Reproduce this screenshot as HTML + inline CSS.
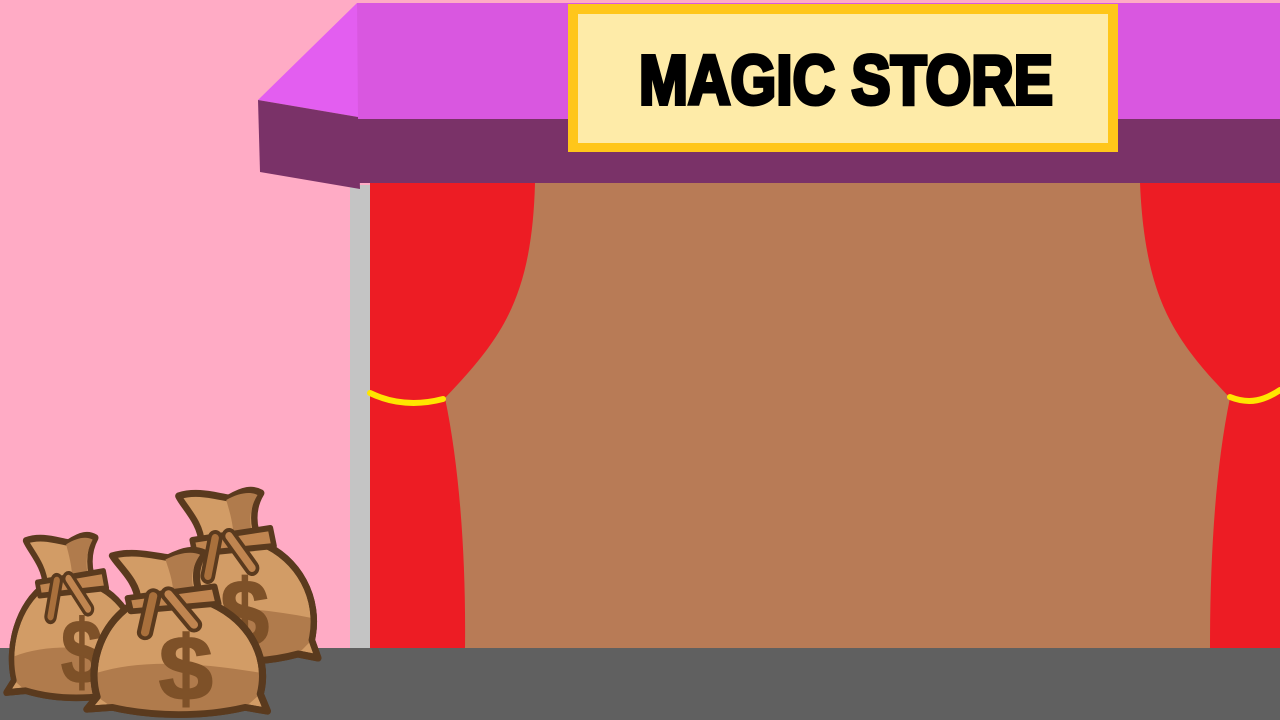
<!DOCTYPE html>
<html><head><meta charset="utf-8"><style>
html,body{margin:0;padding:0;width:1280px;height:720px;overflow:hidden;background:#FFABC5}
svg{display:block}
</style></head><body>
<svg width="1280" height="720" viewBox="0 0 1280 720">
<defs>
<g id="bag">
  <path d="M45 55 C10 75 -5 120 5 155 L-5 168 L20 166 C60 176 110 176 150 166 L172 170 L165 152 C175 110 150 70 110 55 Z" fill="#D29C66" stroke="#5A3A1E" stroke-width="7" stroke-linejoin="round"/>
  <path d="M5 130 C50 115 110 120 165 130 C168 145 168 152 165 152 L150 166 C110 176 60 176 20 166 L5 155 Z" fill="#B07B4C"/>
  <path d="M45 55 C10 75 -5 120 5 155 L-5 168 L20 166 C60 176 110 176 150 166 L172 170 L165 152 C175 110 150 70 110 55 Z" fill="none" stroke="#5A3A1E" stroke-width="7" stroke-linejoin="round"/>
  <path d="M45 55 C45 35 25 18 20 8 C40 2 60 8 75 10 C90 2 100 0 110 5 C100 20 100 40 110 55 Z" fill="#D29C66" stroke="#5A3A1E" stroke-width="7" stroke-linejoin="round"/>
  <path d="M72 12 C85 5 98 3 106 7 C96 22 96 40 104 52 L80 52 C80 35 75 22 72 12Z" fill="#B07B4C"/>
  <text x="92" y="158" font-family="Liberation Sans, sans-serif" font-weight="bold" font-size="95" fill="#7E5128" stroke="#7E5128" stroke-width="2" text-anchor="middle">$</text>
  <path d="M35 52 L120 40 L124 58 L38 66 Z" fill="#C08550" stroke="#5A3A1E" stroke-width="6" stroke-linejoin="round"/>
  <path d="M60 50 L52 88" stroke="#5A3A1E" stroke-width="16" stroke-linecap="round"/>
  <path d="M60 50 L52 88" stroke="#A9703C" stroke-width="8" stroke-linecap="round"/>
  <path d="M75 48 L100 80" stroke="#5A3A1E" stroke-width="16" stroke-linecap="round"/>
  <path d="M75 48 L100 80" stroke="#C08550" stroke-width="8" stroke-linecap="round"/>
</g>
</defs>
<rect width="1280" height="720" fill="#FFABC5"/>
<rect x="0" y="648" width="1280" height="72" fill="#606060"/>
<rect x="350" y="185" width="20" height="463" fill="#C4C4C4"/>
<rect x="370" y="183" width="910" height="465" fill="#B87B56"/>
<rect x="357" y="3" width="923" height="116" fill="#D957E0"/>
<rect x="358" y="119" width="922" height="64" fill="#7A3268"/>
<polygon points="357,3 258,100 358,117" fill="#E35EF0"/>
<polygon points="258,100 358,117 360,189 260,172" fill="#7A3268"/>
<rect x="568" y="4" width="550" height="148" fill="#FFC61A"/>
<rect x="578" y="14" width="530" height="129" fill="#FEEBA8"/>
<text x="846" y="104" font-family="Liberation Sans, sans-serif" font-weight="bold" font-size="70" fill="#000" stroke="#000" stroke-width="4" text-anchor="middle" textLength="414" lengthAdjust="spacingAndGlyphs">MAGIC STORE</text>
<path d="M370 183 L535 183 C532 300 500 340 445 398 C460 470 466 560 465 648 L370 648 Z" fill="#ED1C24"/>
<path d="M1280 183 L1140 183 C1145 300 1175 340 1230 398 C1215 470 1210 560 1210 648 L1280 648 Z" fill="#ED1C24"/>
<path d="M370 393 C395 405 420 405 443 399" stroke="#FFE600" stroke-width="6" fill="none" stroke-linecap="round"/>
<path d="M1230 397 C1250 405 1265 400 1280 390" stroke="#FFE600" stroke-width="6" fill="none" stroke-linecap="round"/>
<use href="#bag" transform="translate(160,488) scale(0.92,1)"/>
<use href="#bag" transform="translate(10,533) scale(0.78,0.95)"/>
<use href="#bag" transform="translate(92,548) scale(1.02,0.96)"/>
</svg>
</body></html>
